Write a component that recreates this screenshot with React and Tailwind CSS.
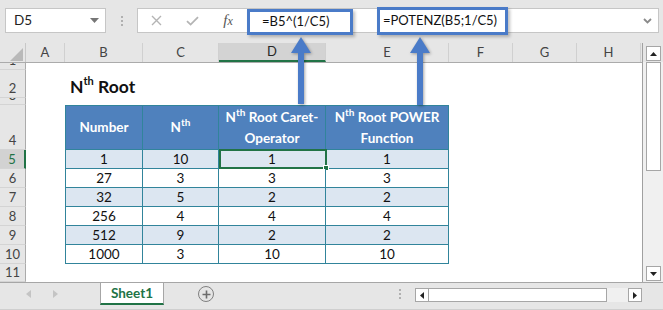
import React from 'react';

const colDefs = [
  { l: 'A', w: 'w-[39px]' },
  { l: 'B', w: 'w-[78px]' },
  { l: 'C', w: 'w-[76px]' },
  { l: 'D', w: 'w-[107px]', active: true },
  { l: 'E', w: 'w-[123px]' },
  { l: 'F', w: 'w-[64px]' },
  { l: 'G', w: 'w-[64px]' },
  { l: 'H', w: 'w-[64px]' },
];

const data = [
  [1, 10, 1, 1],
  [27, 3, 3, 3],
  [32, 5, 2, 2],
  [256, 4, 4, 4],
  [512, 9, 2, 2],
  [1000, 3, 10, 10],
];

function RowHead({ n, h, active }) {
  return (
    <div
      className={
        'w-[26px] shrink-0 flex items-end justify-center overflow-hidden border-b border-b-[#d4d4d4] text-[13px] ' +
        h +
        (active
          ? ' bg-[#d2d2d2] border-r-2 border-r-[#217346] text-[#217346]'
          : ' bg-[#e6e6e6] border-r border-r-[#ababab] text-[#444]')
      }
    >
      <span className="h-[18px] leading-[18px] shrink-0">{n}</span>
    </div>
  );
}

function Sup({ children, cls }) {
  return <span className={'relative ' + cls}>{children}</span>;
}

export default function App() {
  return (
    <div className="relative w-[663px] h-[310px] overflow-hidden bg-[#e6e6e6] flex flex-col [font-family:Lato,'Open_Sans',sans-serif] text-[#222]">
      {/* Formula toolbar */}
      <div className="h-[43px] shrink-0 flex items-start pt-[8px] pl-[5px] pr-[4px]">
        <div className="w-[101px] h-[25px] bg-white border border-[#c6c6c6] flex items-center justify-between pl-[8px] pr-[6px]">
          <span className="text-[13.5px] text-[#222]">D5</span>
          <svg width="9" height="5" viewBox="0 0 9 5">
            <path d="M0 0H9L4.5 5Z" fill="#767676" />
          </svg>
        </div>
        <div className="w-[31px] h-[25px] flex flex-col items-center justify-center gap-[2px]">
          <span className="w-[2px] h-[2px] bg-[#b0b0b0]" />
          <span className="w-[2px] h-[2px] bg-[#b0b0b0]" />
          <span className="w-[2px] h-[2px] bg-[#b0b0b0]" />
        </div>
        <div className="flex-1 h-[25px] bg-white border border-[#c6c6c6] flex items-center">
          <div className="w-[36px] flex justify-center">
            <svg width="11" height="11" viewBox="0 0 11 11">
              <path d="M1 1L10 10M10 1L1 10" stroke="#b4b4b4" strokeWidth="1.4" />
            </svg>
          </div>
          <div className="w-[36px] flex justify-center">
            <svg width="13" height="10" viewBox="0 0 13 10">
              <path d="M1 5.2L4.6 8.6L12 1.2" stroke="#b4b4b4" strokeWidth="1.8" fill="none" />
            </svg>
          </div>
          <div className="w-[36px] flex justify-center">
            <span className="[font-family:'Liberation_Serif',serif] italic text-[15px] text-[#555] leading-none">
              f<span className="text-[12px]">x</span>
            </span>
          </div>
          <div className="flex-1" />
          <svg className="mr-[6px]" width="9" height="6" viewBox="0 0 9 6">
            <path d="M1 1L4.5 4.5L8 1" stroke="#8a8a8a" strokeWidth="1.8" fill="none" />
          </svg>
        </div>
      </div>

      {/* Main area */}
      <div className="h-[239px] shrink-0 flex">
        {/* Grid */}
        <div className="w-[643px] shrink-0 flex flex-col border-r border-r-[#a0a0a0] bg-white">
          {/* Column headers */}
          <div className="h-[20px] shrink-0 flex bg-[#e6e6e6] border-b border-b-[#ababab]">
            <div className="w-[26px] shrink-0 relative border-r border-r-[#c8c8c8]">
              <svg className="absolute left-[10px] top-[5px]" width="13" height="13" viewBox="0 0 13 13">
                <path d="M13 0V13H0Z" fill="#b9b9b9" />
              </svg>
            </div>
            {colDefs.map((c) => (
              <div
                key={c.l}
                className={
                  c.w +
                  ' shrink-0 flex items-center justify-center text-[13px] border-r border-r-[#d0d0d0] ' +
                  (c.active
                    ? 'bg-[#d3d3d3] border-b-2 border-b-[#217346] text-[#262626]'
                    : 'text-[#444]')
                }
              >
                {c.l}
              </div>
            ))}
            <div className="flex-1" />
          </div>

          {/* Row 1 */}
          <div className="h-[7px] shrink-0 flex">
            <RowHead n={1} h="h-[7px]" />
          </div>
          {/* Row 2 */}
          <div className="h-[28px] shrink-0 flex">
            <RowHead n={2} h="h-[28px]" />
            <div className="flex-1 flex items-end pl-[44px] pb-[3px]">
              <span className="text-[17.5px] font-bold leading-none text-[#111]">
                N<Sup cls="text-[11px] top-[-8px]">th</Sup> Root
              </span>
            </div>
          </div>
          {/* Row 3 */}
          <div className="h-[7px] shrink-0 flex">
            <RowHead n={3} h="h-[7px]" />
          </div>
          {/* Row 4 - table header */}
          <div className="h-[45px] shrink-0 flex">
            <RowHead n={4} h="h-[45px]" />
            <div className="w-[39px] shrink-0" />
            <div className="w-[78px] shrink-0 flex items-center justify-center bg-[#4f81bd] border border-[#31849b] text-white font-bold text-[13.5px]">
              Number
            </div>
            <div className="w-[76px] shrink-0 flex items-center justify-center bg-[#4f81bd] border-t border-r border-b border-[#31849b] text-white font-bold text-[13.5px]">
              <span>
                N<Sup cls="text-[10px] top-[-6px]">th</Sup>
              </span>
            </div>
            <div className="w-[107px] shrink-0 flex items-center justify-center text-center bg-[#4f81bd] border-t border-r border-b border-[#31849b] text-white font-bold text-[13.5px] leading-[20px]">
              <span>
                N<Sup cls="text-[10px] top-[-6px]">th</Sup> Root Caret-
                <br />
                Operator
              </span>
            </div>
            <div className="w-[123px] shrink-0 flex items-center justify-center text-center bg-[#4f81bd] border-t border-r border-b border-[#31849b] text-white font-bold text-[13.5px] leading-[20px]">
              <span>
                N<Sup cls="text-[10px] top-[-6px]">th</Sup> Root POWER
                <br />
                Function
              </span>
            </div>
          </div>
          {/* Data rows */}
          {data.map((r, i) => {
            const band = i % 2 === 0 ? 'bg-[#dce6f1]' : 'bg-white';
            const cell = ' shrink-0 flex items-center justify-center text-[13.5px] text-[#111] border-r border-b border-[#31849b] ' + band;
            return (
              <div key={i} className="h-[19px] shrink-0 flex">
                <RowHead n={i + 5} h="h-[19px]" active={i === 0} />
                <div className="w-[39px] shrink-0" />
                <div className={'w-[78px] border-l' + cell}>{r[0]}</div>
                <div className={'w-[76px]' + cell}>{r[1]}</div>
                <div className={'w-[107px] relative' + cell}>
                  {r[2]}
                  {i === 0 && (
                    <>
                      <div className="absolute left-0 top-[-1px] w-[108px] h-[20px] border-2 border-[#217346]" />
                      <div className="absolute left-[104px] top-[15px] w-[6px] h-[6px] bg-[#217346] border border-white" />
                    </>
                  )}
                </div>
                <div className={'w-[123px]' + cell}>{r[3]}</div>
              </div>
            );
          })}
          {/* Row 11 */}
          <div className="h-[18px] shrink-0 flex">
            <RowHead n={11} h="h-[18px]" />
          </div>
        </div>

        {/* Vertical scrollbar */}
        <div className="flex-1 flex flex-col bg-[#f0f0f0]">
          <div className="h-[3px] bg-[#e6e6e6]" />
          <div className="h-[16px] bg-[#e6e6e6] pl-[3px]">
            <div className="w-[15px] h-[15px] bg-white border border-[#a6a6a6] flex items-center justify-center">
              <svg width="7" height="4" viewBox="0 0 7 4">
                <path d="M0 4H7L3.5 0Z" fill="#222" />
              </svg>
            </div>
          </div>
          <div className="h-[109px] pl-[3px]">
            <div className="w-[15px] h-[109px] bg-white border border-[#a6a6a6]" />
          </div>
          <div className="flex-1" />
          <div className="h-[15px] pl-[3px]">
            <div className="w-[15px] h-[15px] bg-white border border-[#a6a6a6] flex items-center justify-center">
              <svg width="7" height="4" viewBox="0 0 7 4">
                <path d="M0 0H7L3.5 4Z" fill="#222" />
              </svg>
            </div>
          </div>
          <div className="h-[1px]" />
        </div>
      </div>

      {/* Sheet tab bar */}
      <div className="flex-1 flex items-start border-t border-t-[#a6a6a6] border-b border-b-[#cfcfcf]">
        <div className="w-[100px] h-[22px] shrink-0 flex items-center pl-[26px] gap-[22px]">
          <svg width="5" height="8" viewBox="0 0 5 8">
            <path d="M5 0V8L0 4Z" fill="#c4c4c4" />
          </svg>
          <svg width="5" height="8" viewBox="0 0 5 8">
            <path d="M0 0V8L5 4Z" fill="#c4c4c4" />
          </svg>
        </div>
        <div className="w-[64px] h-[22px] shrink-0 bg-white border-l border-r border-[#a6a6a6] border-b-2 border-b-[#217346] flex items-center justify-center text-[13.5px] font-bold text-[#217346]">
          Sheet1
        </div>
        <div className="ml-[34px] h-[22px] flex items-center">
          <div className="w-[16px] h-[16px] rounded-full border-[1.5px] border-[#808080] flex items-center justify-center">
            <svg width="9" height="9" viewBox="0 0 9 9">
              <path d="M4.5 0.5V8.5M0.5 4.5H8.5" stroke="#6d6d6d" strokeWidth="1.6" />
            </svg>
          </div>
        </div>
        <div className="flex-1" />
        <div className="h-[22px] flex flex-col items-center justify-center gap-[2px] w-[3px]">
          <span className="w-[2px] h-[2px] bg-[#b0b0b0]" />
          <span className="w-[2px] h-[2px] bg-[#b0b0b0]" />
          <span className="w-[2px] h-[2px] bg-[#b0b0b0]" />
        </div>
        <div className="ml-[14px] mr-[21px] mt-[5px] flex">
          <div className="w-[14px] h-[14px] bg-white border border-[#a6a6a6] flex items-center justify-center">
            <svg width="4" height="7" viewBox="0 0 4 7">
              <path d="M4 0V7L0 3.5Z" fill="#222" />
            </svg>
          </div>
          <div className="w-[178px] h-[14px] bg-white border-t border-b border-r border-[#a6a6a6]" />
          <div className="w-[21px] h-[14px] bg-[#f0f0f0]" />
          <div className="w-[14px] h-[14px] bg-white border border-[#a6a6a6] flex items-center justify-center">
            <svg width="4" height="7" viewBox="0 0 4 7">
              <path d="M0 0V7L4 3.5Z" fill="#222" />
            </svg>
          </div>
        </div>
      </div>

      {/* Annotation overlays */}
      <div className="absolute left-[247px] top-[9px] w-[106px] h-[26px] border-[3px] border-[#4a7bc8] bg-white shadow-[2px_2px_3px_rgba(0,0,0,0.25)] flex items-center pl-[12px] text-[13px] text-[#111]">
        =B5^(1/C5)
      </div>
      <div className="absolute left-[377px] top-[7px] w-[131px] h-[28px] border-[3px] border-[#4a7bc8] bg-white shadow-[2px_2px_3px_rgba(0,0,0,0.25)] flex items-center pl-[3px] text-[13px] text-[#111]">
        =POTENZ(B5;1/C5)
      </div>
      <svg
        className="absolute left-0 top-0 drop-shadow-[1px_1px_1.5px_rgba(0,0,0,0.35)]"
        width="663"
        height="120"
        viewBox="0 0 663 120"
      >
        <path d="M301 37L311 53H304V104H298V53H291Z" fill="#4a7bc8" />
        <path d="M420 37L430 53H423V105H417V53H410Z" fill="#4a7bc8" />
      </svg>
    </div>
  );
}
